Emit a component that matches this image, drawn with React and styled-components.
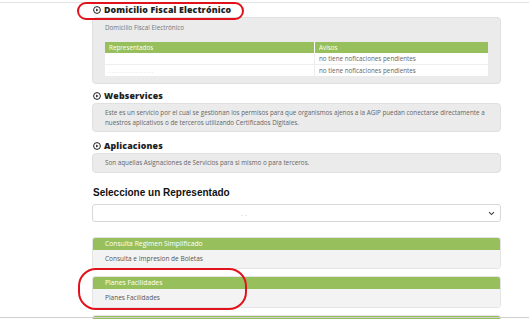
import React from "react";
import styled, { createGlobalStyle } from "styled-components";

const GlobalStyle = createGlobalStyle`
    body {
        margin: 0;
        background: #ffffff;
        font-family: "Open Sans", "Liberation Sans", sans-serif;
    }
`;

const Page = styled.div`
    position: relative;
    width: 529px;
    height: 319px;
    overflow: hidden;
    background: #fff;
`;

const TopRule = styled.div`
    height: 1px;
    margin-top: 2px;
    background: #e2e2e2;
`;

const Column = styled.div`
    margin-left: 92px;
    width: 409px;
    display: flex;
    flex-direction: column;
`;

const Section = styled.div`
    display: flex;
    flex-direction: column;
    margin-bottom: ${props => props.gap || 8}px;
`;

const Heading = styled.div`
    height: 14px;
    display: flex;
    align-items: center;
    gap: 3px;
    padding-left: 1px;
    font-family: "Open Sans", "Lato", sans-serif;
    font-weight: 800;
    font-size: 8.8px;
    letter-spacing: 0.15px;
    color: #1e1e1e;
`;

const Panel = styled.div`
    background: #ebebeb;
    border: 1px solid #e0e0e0;
    border-radius: 4px;
    padding: ${props => props.pad || "5px 12px"};
    font-size: 6.3px;
    line-height: 10px;
    color: #666;
`;

const PanelTitle = styled.div`
    margin-bottom: 9px;
    color: #777;
`;

const Table = styled.div`
    display: grid;
    grid-template-columns: 209px 1fr;
    background: #fff;
`;

const HeadCell = styled.div`
    background: #97c05c;
    color: #fff;
    height: 11px;
    line-height: 11px;
    padding-left: 4px;
    border-left: ${props => props.first ? "none" : "1px solid #fff"};
`;

const Cell = styled.div`
    height: 11px;
    line-height: 11px;
    padding-left: 4px;
    border-left: ${props => props.first ? "none" : "1px solid #eee"};
    border-top: ${props => props.top ? "none" : "1px solid #eee"};
    color: #666;
`;

const Blurred = styled.span`
    color: #d8d8d8;
    letter-spacing: 1px;
`;

const SelectTitle = styled.div`
    font-family: "Liberation Sans", Arial, sans-serif;
    font-weight: 700;
    font-size: 10px;
    color: #111;
    height: 14px;
    line-height: 14px;
    margin-top: 5px;
    padding-left: 1px;
`;

const Select = styled.div`
    margin-top: 4px;
    height: 16px;
    border: 1px solid #d8d8d8;
    border-radius: 3px;
    background: #fff;
    display: flex;
    align-items: center;
    justify-content: space-between;
    padding: 0 5px 0 8px;
    color: #bbb;
    font-size: 7px;
    margin-bottom: 15px;
`;

const Card = styled.div`
    display: flex;
    flex-direction: column;
    margin-bottom: 7px;
    border: 1px solid #e4e4e4;
    border-radius: 3px;
    overflow: hidden;
`;

const CardHeader = styled.div`
    height: 12px;
    line-height: 12px;
    background: #97c05c;
    color: #fff;
    font-size: 6.8px;
    padding-left: 12px;
`;

const CardBody = styled.div`
    height: 18px;
    line-height: 18px;
    background: #f3f3f3;
    color: #555;
    font-size: 6.5px;
    padding-left: 12px;
`;

const Mark = styled.div`
    position: absolute;
    left: ${props => props.x}px;
    top: ${props => props.y}px;
    width: ${props => props.w}px;
    height: ${props => props.h}px;
    border: 2.5px solid #e2121c;
    border-radius: ${props => props.r};
    box-sizing: border-box;
`;

const BottomRule = styled.div`
    position: absolute;
    left: 0;
    right: 0;
    top: 317px;
    height: 1px;
    background: #cfcfcf;
`;

const PlayIcon = () => (
    <svg width="8" height="8" viewBox="0 0 16 16">
        <circle cx="8" cy="8" r="6.8" fill="none" stroke="#1e1e1e" strokeWidth="2" />
        <path d="M6.2 4.8 L11 8 L6.2 11.2 Z" fill="#1e1e1e" />
    </svg>
);

const Chevron = () => (
    <svg width="7" height="5" viewBox="0 0 10 7">
        <path d="M1.5 1.5 L5 5 L8.5 1.5" fill="none" stroke="#444" strokeWidth="1.6" />
    </svg>
);

const cards = [
    { title: "Consulta Regimen Simplificado", body: "Consulta e Impresion de Boletas" },
    { title: "Planes Facilidades", body: "Planes Facilidades" },
    { title: "", body: "" },
];

const App = () => {
    return (
        <>
            <GlobalStyle />
            <Page>
                <TopRule />
                <Column>
                    <Section gap={5}>
                        <Heading><PlayIcon />Domicilio Fiscal Electrónico</Heading>
                        <Panel pad="5px 12px 7px">
                            <PanelTitle>Domicilio Fiscal Electrónico</PanelTitle>
                            <Table>
                                <HeadCell first>Representados</HeadCell>
                                <HeadCell>Avisos</HeadCell>
                                <Cell first top></Cell>
                                <Cell top>no tiene noficaciones pendientes</Cell>
                                <Cell first><Blurred>.................</Blurred></Cell>
                                <Cell>no tiene noficaciones pendientes</Cell>
                            </Table>
                        </Panel>
                    </Section>
                    <Section gap={7}>
                        <Heading><PlayIcon />Webservices</Heading>
                        <Panel pad="4px 12px 3px">
                            Este es un servicio por el cual se gestionan los permisos para que organismos ajenos a la AGIP puedan conectarse directamente a nuestros aplicativos o de terceros utilizando Certificados Digitales.
                        </Panel>
                    </Section>
                    <Section gap={8}>
                        <Heading><PlayIcon />Aplicaciones</Heading>
                        <Panel pad="4px 12px">
                            Son aquellas Asignaciones de Servicios para si mismo o para terceros.
                        </Panel>
                    </Section>
                    <SelectTitle>Seleccione un Representado</SelectTitle>
                    <Select>
                        <span style={{ marginLeft: 140 }}>. .</span>
                        <Chevron />
                    </Select>
                    {cards.map((c, i) => (
                        <Card key={i}>
                            <CardHeader>{c.title}</CardHeader>
                            <CardBody>{c.body}</CardBody>
                        </Card>
                    ))}
                </Column>
                <Mark x={77} y={2} w={167} h={18} r="9px / 50%" />
                <Mark x={78} y={268} w={169} h={42} r="18px" />
                <BottomRule />
            </Page>
        </>
    );
};

export default App;
